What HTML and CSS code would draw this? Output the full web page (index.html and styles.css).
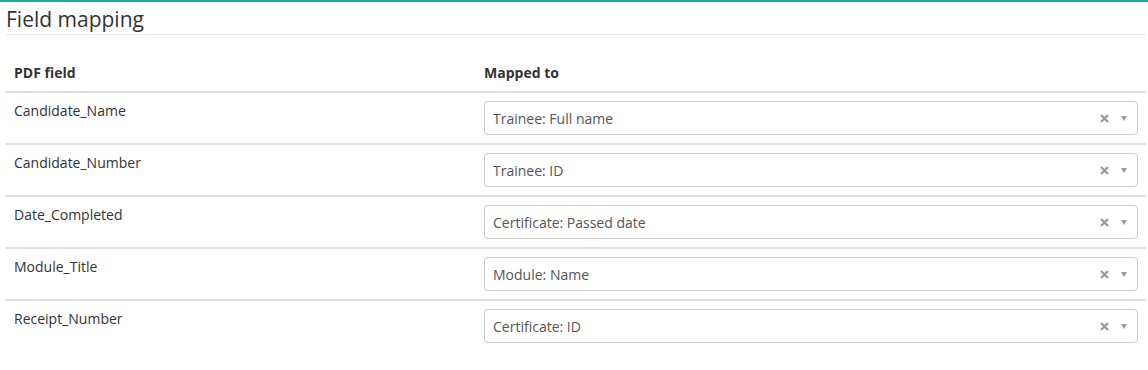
FILE: index.html
```
<!DOCTYPE html>
<html lang="en">
<head>
    <meta charset="UTF-8">
    <meta name="viewport" content="width=device-width, initial-scale=1.0">
    <title>Field mapping</title>
    <link rel="stylesheet" href="styles.css">
</head>
<body>
    <div class="page">
        <h2 class="section-title">Field mapping</h2>
        <table class="mapping-table">
            <thead>
                <tr>
                    <th class="col-field">PDF field</th>
                    <th>Mapped to</th>
                </tr>
            </thead>
            <tbody>
                <tr>
                    <td>Candidate_Name</td>
                    <td>
                        <div class="select">
                            <span class="select-value">Trainee: Full name</span>
                            <svg class="select-clear" viewBox="0 0 9 9"><path d="M1 1L8 8M8 1L1 8"/></svg>
                            <span class="select-caret"></span>
                        </div>
                    </td>
                </tr>
                <tr>
                    <td>Candidate_Number</td>
                    <td>
                        <div class="select">
                            <span class="select-value">Trainee: ID</span>
                            <svg class="select-clear" viewBox="0 0 9 9"><path d="M1 1L8 8M8 1L1 8"/></svg>
                            <span class="select-caret"></span>
                        </div>
                    </td>
                </tr>
                <tr>
                    <td>Date_Completed</td>
                    <td>
                        <div class="select">
                            <span class="select-value">Certificate: Passed date</span>
                            <svg class="select-clear" viewBox="0 0 9 9"><path d="M1 1L8 8M8 1L1 8"/></svg>
                            <span class="select-caret"></span>
                        </div>
                    </td>
                </tr>
                <tr>
                    <td>Module_Title</td>
                    <td>
                        <div class="select">
                            <span class="select-value">Module: Name</span>
                            <svg class="select-clear" viewBox="0 0 9 9"><path d="M1 1L8 8M8 1L1 8"/></svg>
                            <span class="select-caret"></span>
                        </div>
                    </td>
                </tr>
                <tr>
                    <td>Receipt_Number</td>
                    <td>
                        <div class="select">
                            <span class="select-value">Certificate: ID</span>
                            <svg class="select-clear" viewBox="0 0 9 9"><path d="M1 1L8 8M8 1L1 8"/></svg>
                            <span class="select-caret"></span>
                        </div>
                    </td>
                </tr>
            </tbody>
        </table>
    </div>
</body>
</html>
```
FILE: styles.css
```
body {
    margin: 0;
    font-family: "Open Sans", "Liberation Sans", sans-serif;
    font-size: 14px;
    color: #333;
    background-color: #fff;
    border-top: 2px solid #26a69a;
}

.page {
    padding: 0 2px 0 6px;
}

.section-title {
    margin: 0 0 20px;
    padding-top: 3px;
    font-size: 21px;
    font-weight: 400;
    line-height: 29px;
    color: #333;
    border-bottom: 1px solid #e5e5e5;
}

.mapping-table {
    width: 100%;
    border-collapse: collapse;
}

.mapping-table th {
    text-align: left;
    font-weight: 700;
    padding: 8px;
    line-height: 20px;
    vertical-align: bottom;
    border-bottom: 2px solid #ddd;
}

.mapping-table td {
    padding: 8px;
    line-height: 20px;
    vertical-align: top;
    border-bottom: 2px solid #ddd;
}

.mapping-table tbody tr:last-child td {
    border-bottom: none;
}

.col-field {
    width: 454px;
}

.select {
    display: flex;
    align-items: center;
    height: 34px;
    box-sizing: border-box;
    padding: 1px 10px 0 8px;
    border: 1px solid #ccc;
    border-radius: 4px;
    color: #555;
}

.select-value {
    flex: 1;
}

.select-clear {
    width: 9px;
    height: 9px;
    margin-right: 12px;
    stroke: #999;
    stroke-width: 2.2;
    fill: none;
}

.select-caret {
    width: 0;
    height: 0;
    border-left: 3.5px solid transparent;
    border-right: 3.5px solid transparent;
    border-top: 5px solid #999;
}
```
